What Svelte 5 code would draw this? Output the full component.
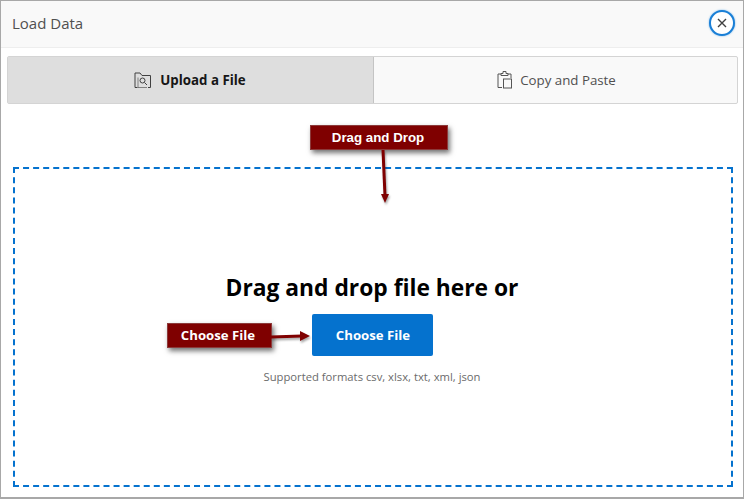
<script lang="ts">
	const tabs = [
		{ label: 'Upload a File', active: true },
		{ label: 'Copy and Paste', active: false }
	];
</script>

<div class="dialog">
	<header class="titlebar">
		<h1 class="title">Load Data</h1>
		<button type="button" class="close" aria-label="Close">
			<svg width="10" height="10" viewBox="0 0 10 10">
				<path d="M1 1l8 8M9 1l-8 8" stroke="#404040" stroke-width="1.4" fill="none" />
			</svg>
		</button>
	</header>

	<div class="tabs">
		{#each tabs as tab}
			<div class="tab" class:tab--active={tab.active}>
				{#if tab.active}
					<svg class="tab-icon" width="18" height="16" viewBox="0 0 18 16" fill="none" stroke="#404040">
						<path d="M3.500 15.500h-2.500v-14.500h5l2 2.500h8.500v12h-2.500" />
						<path d="M4 5.500v10h9" stroke-width="0.6" />
						<circle cx="8.500" cy="8.500" r="2.500" />
						<path d="M10.500 10.500l2.500 2.500" />
					</svg>
				{:else}
					<svg class="tab-icon" width="16" height="18" viewBox="0 0 16 18" fill="none" stroke="#555">
						<path d="M4 3h-3v13.500h4" />
						<path d="M4 4.500v-2h2v-2h3v2h2v2z" />
						<path d="M11 3h3v4" />
						<rect x="6.500" y="8" width="8" height="9" />
					</svg>
				{/if}
				<span>{tab.label}</span>
			</div>
		{/each}
	</div>

	<section class="dropzone">
		<h2 class="drop-title">Drag and drop file here or</h2>
		<button type="button" class="choose">Choose File</button>
		<p class="formats">Supported formats csv, xlsx, txt, xml, json</p>
	</section>

	<!-- callouts drawn on top of the screenshot -->
	<div class="callout callout--drag">Drag and Drop</div>
	<div class="callout callout--file">Choose File</div>
	<svg class="arrows" width="744" height="499" viewBox="0 0 744 499">
		<g fill="#7f0000" stroke="#7f0000">
			<path d="M383 150L385 196" stroke-width="3" fill="none" />
			<path d="M381 194h8l-4 9z" stroke="none" />
			<path d="M271 337L302 336" stroke-width="3" fill="none" />
			<path d="M300 331v10l10-5z" stroke="none" />
		</g>
	</svg>
</div>

<style>
	:global(body) {
		background: #fff;
		font-family: 'Open Sans', sans-serif;
	}

	.dialog {
		position: relative;
		box-sizing: border-box;
		width: 744px;
		height: 499px;
		display: flex;
		flex-direction: column;
		background: #fff;
		border: 1px solid #a8a8a8;
		border-bottom-width: 2px;
		overflow: hidden;
	}

	.titlebar {
		flex: none;
		box-sizing: border-box;
		height: 47px;
		display: flex;
		align-items: center;
		justify-content: space-between;
		padding: 0 8px 2px 11px;
		background: #f9f9f9;
		border-bottom: 1px solid #eeeeee;
	}

	.title {
		margin: 0;
		font-size: 15px;
		font-weight: 400;
		color: #505050;
	}

	.close {
		box-sizing: border-box;
		width: 26px;
		height: 26px;
		display: flex;
		align-items: center;
		justify-content: center;
		padding: 0;
		background: #fff;
		border: 2px solid #1a7fd6;
		border-radius: 50%;
		box-shadow: 0 0 2px #6fb2ea;
	}

	.tabs {
		flex: none;
		display: flex;
		height: 48px;
		box-sizing: border-box;
		margin: 8px 5px 0 6px;
		border: 1px solid #d4d4d4;
		border-radius: 2px;
		background: #f9f9f9;
	}

	.tab {
		flex: 1;
		display: flex;
		align-items: center;
		justify-content: center;
		gap: 7px;
		padding-left: 2px;
		font-size: 13.3px;
		color: #505050;
	}

	.tab--active {
		flex: none;
		box-sizing: border-box;
		width: 366px;
		gap: 8px;
		padding-left: 0;
		padding-right: 1px;
		background: #dedede;
		border-right: 1px solid #c4c4c4;
		font-weight: 700;
		color: #161616;
	}

	.tab-icon {
		flex: none;
	}

	.dropzone {
		flex: none;
		box-sizing: border-box;
		width: 720px;
		height: 320px;
		margin: 63px 0 0 12px;
		display: flex;
		flex-direction: column;
		align-items: center;
		padding: 103px 2px 0 0;
		border: 2px dashed #0572ce;
	}

	.drop-title {
		margin: 0;
		font-size: 22.8px;
		line-height: 32px;
		font-weight: 700;
		color: #000;
	}

	.choose {
		width: 121px;
		height: 42px;
		margin-top: 10px;
		padding: 0 0 0 2px;
		border: none;
		border-radius: 2px;
		background: #0572ce;
		color: #fff;
		font-family: inherit;
		font-size: 13.2px;
		font-weight: 700;
	}

	.formats {
		margin: 13px 0 0;
		font-size: 11.25px;
		line-height: 16px;
		color: #6b6b6b;
	}

	.callout {
		position: absolute;
		box-sizing: border-box;
		height: 25px;
		line-height: 23px;
		text-align: center;
		background: #7f0000;
		border: 1px solid #8c3a3a;
		box-shadow: 2px 3px 5px rgba(0, 0, 0, 0.55);
		color: #fff;
		font-size: 13.2px;
		font-weight: 700;
	}

	.callout--drag {
		left: 309px;
		top: 124px;
		width: 138px;
		font-family: 'Liberation Sans', sans-serif;
		font-size: 13.3px;
		text-indent: -2px;
	}

	.callout--file {
		left: 166px;
		top: 322px;
		width: 105px;
		text-indent: -3px;
	}

	.arrows {
		position: absolute;
		left: -1px;
		top: -1px;
		filter: drop-shadow(1px 2px 1px rgba(0, 0, 0, 0.35));
		pointer-events: none;
	}
</style>
